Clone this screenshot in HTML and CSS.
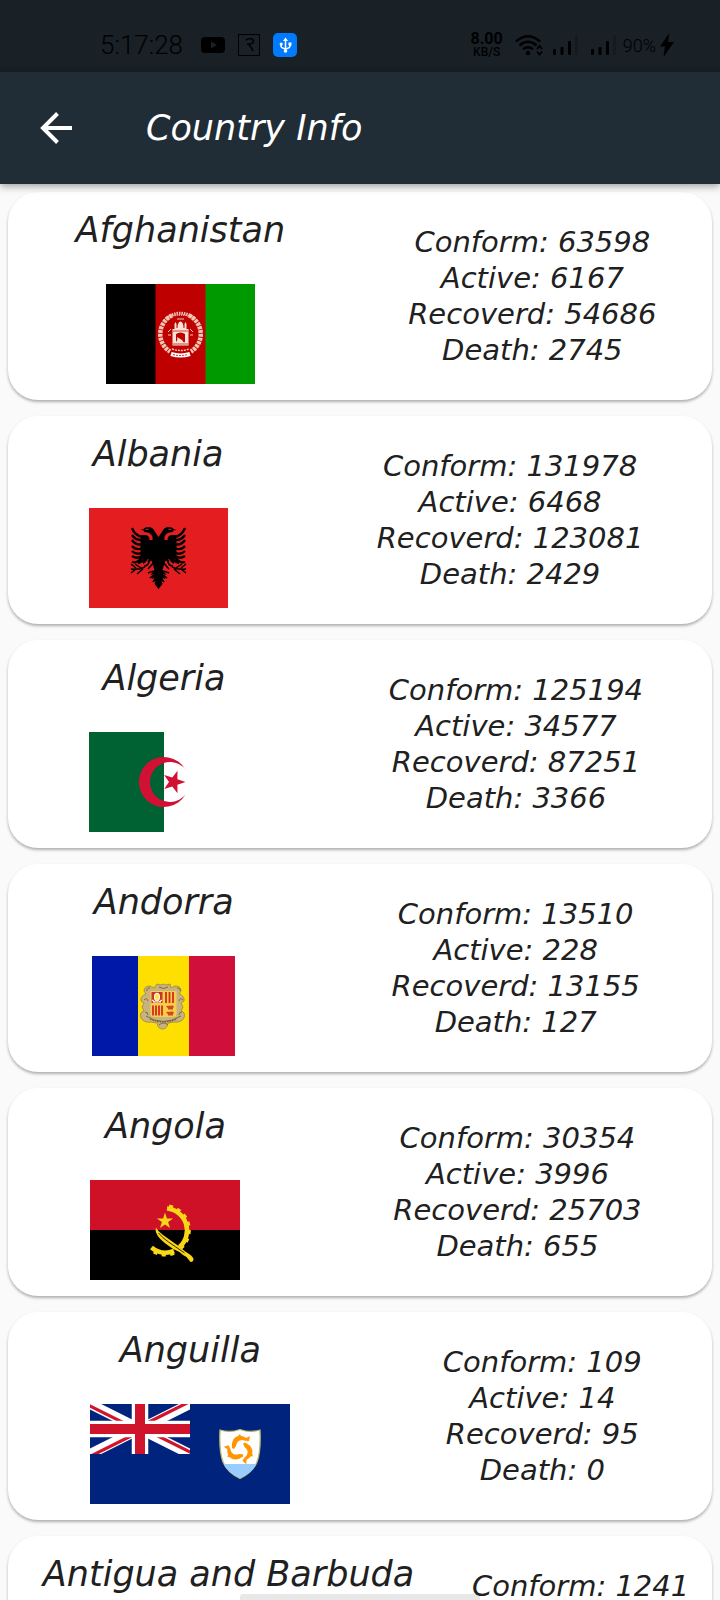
FILE: index.html
```html
<!DOCTYPE html>
<html lang="en">
<head>
<meta charset="utf-8">
<meta name="viewport" content="width=device-width, initial-scale=1">
<title>Country Info</title>
<link rel="stylesheet" href="styles.css">
</head>
<body>
<div class="screen">
  <div class="status">
    <span class="clock">5:17:28</span>
    <span class="notices">
      <svg width="24" height="24" viewBox="0 0 24 24"><rect y="4" width="24" height="16" rx="4"/><path d="M10 8.500l6 3.500-6 3.500z" fill="#192026"/></svg>
      <svg width="24" height="24" viewBox="0 0 24 24" fill="none" stroke="#000"><rect x="1.500" y="1.500" width="21" height="21"/><path d="M9 7q5-3 7 0t-3 4l-3 0M12 12q3 3 4 6" stroke-width="1.600"/></svg>
      <svg width="24" height="24" viewBox="0 0 24 24"><rect width="24" height="24" rx="5" fill="#007bff"/><g fill="none" stroke="#fff" stroke-width="1.500"><path d="M12.500 7v11M8 11v2q0 2 4.500 3 4.500-1 4.500-3v-2"/></g><path d="M12.500 4.500l2.500 3.500h-5z" fill="#fff"/><circle cx="12.500" cy="18" r="1.800" fill="#fff"/><circle cx="8.200" cy="11" r="1.600" fill="#fff"/><rect x="15.500" y="9.500" width="3" height="3" fill="#fff"/></svg>
    </span>
    <span class="rate"><b>8.00</b><small>KB/S</small></span>
    <svg class="wifi" width="28" height="22" viewBox="0 0 28 22"><g fill="none" stroke="#000" stroke-width="2.400"><path d="M1 7.500q12-10.500 24 0M4.500 11.500q8.500-7.500 17 0M8 15.200q5-4 10 0"/></g><circle cx="13" cy="19" r="2.200"/><path d="M22 15l2.500-3 2.500 3M22 17.500l2.500 3 2.500-3" fill="none" stroke="#000" stroke-width="1.800"/></svg>
    <svg class="signal" width="26" height="22" viewBox="0 0 26 22"><rect y="15" width="3" height="6" rx="1"/><rect x="7.500" y="13" width="3" height="8" rx="1"/><rect x="15" y="7" width="3" height="14" rx="1"/><rect x="22" y="1" width="3" height="20" rx="1" fill="#141a20"/></svg>
    <svg class="signal" width="26" height="22" viewBox="0 0 26 22"><rect y="15" width="3" height="6" rx="1"/><rect x="7.500" y="13" width="3" height="8" rx="1"/><rect x="15" y="7" width="3" height="14" rx="1"/><rect x="22" y="1" width="3" height="20" rx="1" fill="#141a20"/></svg>
    <span class="battery">90%</span>
    <svg width="14" height="24" viewBox="0 0 14 24"><path d="M9.500 0L0 13.500h5L3.500 24 14 9H8z"/></svg>
  </div>

  <header class="appbar">
    <button class="back" type="button" aria-label="Back">
      <svg width="34" height="34" viewBox="0 0 34 34" fill="none" stroke="#fff" stroke-width="4"><path d="M33 17H4M18.500 2.500L4 17l14.500 14.500"/></svg>
    </button>
    <h1>Country Info</h1>
  </header>

  <main class="list">
    <article class="card">
      <div class="country">
        <h2>Afghanistan</h2>
        <svg width="149" height="100" viewBox="0 0 149 100">
          <rect width="149" height="100" fill="#090"/><rect width="99.500" height="100" fill="#be0000"/><rect width="49.500" height="100"/>
          <g fill="none" stroke="#f3c5b5">
            <path d="M66 31.500A20.500 20.500 0 0 0 64 67.500M83 31.500A20.500 20.500 0 0 1 85 67.500" stroke-width="4.500" stroke-dasharray="3 .8"/>
            <path d="M60 35A21 21 0 0 1 89 35" stroke-width="3" stroke-dasharray="1.500 .9"/>
            <path d="M62 33.500q12.500-5 25 0" stroke-width="1.500" stroke-dasharray="1.200 1"/>
            <path d="M66 65q8.500 3 17 0" stroke-width="1.500" stroke-dasharray="2 1"/>
            <path d="M65 70q9.500 3 19 0" stroke="#fff" stroke-width="4"/>
            <path d="M62 48l3-3m-3 6h3M87 48l-3-3m3 6h-3M71 35h7"/>
          </g>
          <path d="M66.500 61.500V45h2v-5l1-2 1 2v4h1q0-6 3-6.500 3 .5 3 6.500h1v-4l1-2 1 2v5h2v16.500z" fill="#f8e2d5"/>
          <path d="M70 58v-8q4.500-3 9 0v8l-3 1-4-4z" fill="#be0000"/><path d="M71 53l5 3 2 3h-6z" fill="#f8e2d5"/><path d="M67 47h15M67 60h15" stroke="#be0000" stroke-width=".7"/>
          <path d="M67 70.500q7.500 2 15 0" fill="none" stroke="#be0000" stroke-width=".8" stroke-dasharray="2 1"/>
        </svg>
      </div>
      <div class="stats"><p>Conform: 63598</p><p>Active: 6167</p><p>Recoverd: 54686</p><p>Death: 2745</p></div>
    </article>

    <article class="card">
      <div class="country">
        <h2>Albania</h2>
        <svg width="139" height="100" viewBox="0 0 139 100">
          <defs><g id="eagle-half">
            <path d="M70 29h-.5l-4-6q-2-4-6-4-4 0-5 2l-3 1q3 0 4 1l-1 1q6 0 8 3 2 2 1 5h-3q0-5-5-5h-4v21q2 4 6 3 5 0 6 4 1 4 2 7l-4 5 4-1-3 5 3-1-2 4 3-1-1 3 4 5h.5z"/>
            <path d="M43 20q3 8 11 9M43 27q4 6 11 5M43 32q4 6 11 4M43 38q4 5 11 2M43 43q5 5 11 1M43 48q6 4 11-1M43 54q7 2 11-7M49 55q6-1 8-9M54 55q4-3 5-8M59 54q3-2 3-7" fill="none" stroke="#000" stroke-width="2.300"/>
            <path d="M65 54q-3 4-6 7M60 54q-1 4-5 4M56 59q-6 3-14 2M54 61l-6 5M52 60l-6-4M47 61l-5 4M47 60l-5-4M67 63q-4 0-8 2M68 66q-4 1-7 4M69 70q-3 1-5 4" fill="none" stroke="#000" stroke-width="1.500"/>
          </g></defs>
          <rect width="139" height="100" fill="#e41e20"/>
          <use href="#eagle-half"/><use href="#eagle-half" transform="matrix(-1 0 0 1 139 0)"/>
          <path d="M56.500 21.500h3M79.500 21.500h3" stroke="#e41e20" stroke-width=".8"/>
        </svg>
      </div>
      <div class="stats"><p>Conform: 131978</p><p>Active: 6468</p><p>Recoverd: 123081</p><p>Death: 2429</p></div>
    </article>

    <article class="card">
      <div class="country">
        <h2>Algeria</h2>
        <svg width="150" height="100" viewBox="0 0 150 100">
          <rect width="150" height="100" fill="#fff"/><rect width="75" height="100" fill="#006233"/>
          <path d="M96.500 37.500A25 25 0 1 0 96.500 62.500 20 20 0 1 1 96.500 37.500z" fill="#d21034"/>
          <path d="M96.500 50L88.400 52.700 88.500 61.200 83.300 54.400 75.200 57 80 50 75.200 43 83.300 45.600 88.500 38.800 88.400 47.300z" fill="#d21034"/>
        </svg>
      </div>
      <div class="stats"><p>Conform: 125194</p><p>Active: 34577</p><p>Recoverd: 87251</p><p>Death: 3366</p></div>
    </article>

    <article class="card">
      <div class="country">
        <h2>Andorra</h2>
        <svg width="143" height="100" viewBox="0 0 143 100">
          <rect width="143" height="100" fill="#d0103a"/><rect width="97" height="100" fill="#fedf00"/><rect width="46" height="100" fill="#0018a8"/>
          <path d="M65 28l4 1 2.500-1 2.500 1 4-1 1 4 4-2q6 0 6 5l-2 3q6 2 5 7l-3 2 2 4-2 4q5 1 3 7-3 5-10 4l-6 1q-1 6-5.500 6t-5.500-6l-6-1q-7 1-10-4-2-6 3-7l-2-4 2-4-3-2q-1-5 5-7l-2-3q0-5 6-5l4 2z" fill="#c7b37f" stroke="#a08445" stroke-width=".8"/>
          <path d="M55 35q-1-3 3-3M88 35q1-3-3-3M67 31q4.500 3 9 0M52 44q3-3 4 1M91 44q-3-3-4 1M54 60q17 11 35 0M53 56q3 0 3 3M90 56q-3 0-3 3M67 69q4.500-4 9 0" fill="none" stroke="#80693b"/>
          <path d="M58 63q13 6 27 0" fill="none" stroke="#6c552c" stroke-width="1.200" stroke-dasharray="1.500 1"/>
          <path d="M58.500 35h26v23q0 3-4 3h-18q-4 0-4-3z" fill="#f5cf4b"/>
          <rect x="59.500" y="36" width="11" height="11" fill="#c93425"/><ellipse cx="65" cy="41" rx="2.600" ry="4" fill="#ffe54b" stroke="#fff"/><path d="M61 46h8M60 44l3 2M70 44l-3 2" stroke="#fff" stroke-width="1.200"/>
          <path d="M74 36v11M77.500 36v11M81 36v11M61 49.500v10M64 49.500v10M67 49.500v10M70 49.500v10" stroke="#d52b1e" stroke-width="1.800"/>
          <path d="M74 50l7-.5 1 1.500-1 1v1.500h-5v-1zM74 56l7-.5 1 1.500-1 1v1.500h-5v-1z" fill="#d7461d"/>
        </svg>
      </div>
      <div class="stats"><p>Conform: 13510</p><p>Active: 228</p><p>Recoverd: 13155</p><p>Death: 127</p></div>
    </article>

    <article class="card">
      <div class="country">
        <h2>Angola</h2>
        <svg width="150" height="100" viewBox="0 0 150 100">
          <rect width="150" height="100"/><rect width="150" height="50" fill="#ce1126"/>
          <g fill="none" stroke="#f9d616">
            <path d="M77 28.500A22 22 0 0 1 89.500 67M84 71A22 22 0 0 1 61.500 67.500" stroke-width="4.600"/>
            <path d="M79 26.400A24 24 0 0 1 91 68M84 73A24 24 0 0 1 60.500 69.500" stroke-width="3.600" stroke-dasharray="4 4.400"/>
          </g>
          <path d="M75 32.500l1.900 5.900h6.200l-5 3.700 1.900 5.900-5-3.600-5 3.600 1.900-5.900-5-3.700h6.200z" fill="#f9d616"/>
          <path d="M66 47.500q2 4 7 7.500l17 12q3 3 6 5 7 4 7.500 7 0 3-3 3l-4-5q-4-2-7-5-6-2-12-7-14-10-11.500-17.500z" fill="#f9d616"/>
          <path d="M68.500 53q4 5 10 9t16 11" fill="none" stroke="#000" stroke-width=".8"/>
        </svg>
      </div>
      <div class="stats"><p>Conform: 30354</p><p>Active: 3996</p><p>Recoverd: 25703</p><p>Death: 655</p></div>
    </article>

    <article class="card">
      <div class="country">
        <h2>Anguilla</h2>
        <svg width="200" height="100" viewBox="0 0 200 100">
          <defs>
            <clipPath id="canton"><path d="M0 0h100v50H0z"/></clipPath>
            <path id="dolphin" d="M142 44q-1-10 6-12l2-2 1 2q3 0 5 2l4-2-1 5q-4 0-7-1-5 0-6 6l-2 3z"/>
          </defs>
          <rect width="200" height="100" fill="#00247d"/>
          <g clip-path="url(#canton)" fill="none">
            <path d="M0 0l100 50M100 0L0 50" stroke="#fff" stroke-width="10"/>
            <path d="M-1 1.500l51 25.500M101 48.500L50 23M49 23l51-25.500M51 27L0 52.500" stroke="#cf142b" stroke-width="3.200"/>
            <path d="M50 0v50M0 25h100" stroke="#fff" stroke-width="16.500"/>
            <path d="M50 0v50M0 25h100" stroke="#cf142b" stroke-width="10"/>
          </g>
          <path d="M130 26q10 3 20-.5 10 3.500 20 .5 1 22-3 32-4 10-17 16.500-13-6.500-17-16.500-4-10-3-32z" fill="#fff" stroke="#b8b86b" stroke-width="1.300"/>
          <path d="M133.800 60h32.400q-4 9-16.200 14-12.200-5-16.200-14z" fill="#9cf"/>
          <g fill="#ff9500"><use href="#dolphin"/><use href="#dolphin" transform="rotate(120 150 45)"/><use href="#dolphin" transform="rotate(240 150 45)"/></g>
        </svg>
      </div>
      <div class="stats"><p>Conform: 109</p><p>Active: 14</p><p>Recoverd: 95</p><p>Death: 0</p></div>
    </article>

    <article class="card">
      <div class="country"><h2>Antigua and Barbuda</h2></div>
      <div class="stats"><p>Conform: 1241</p></div>
    </article>
  </main>
  <div class="home-bar"></div>
</div>
</body>
</html>
```

FILE: styles.css
```css
* { box-sizing: border-box; }
body {
  margin: 0;
  background: #fafafa;
  color: #202020;
  font-family: "DejaVu Sans", sans-serif;
}
h1, h2, p { margin: 0; font-weight: 400; font-style: italic; white-space: nowrap; }
svg { display: block; flex: none; }

.screen {
  position: relative;
  display: flex;
  flex-direction: column;
  height: 100vh;
  overflow: hidden;
}

.status {
  flex: none;
  display: flex;
  align-items: center;
  height: 72px;
  padding: 18px 46px 0 100px;
  background: #192026;
  color: #000;
  font-family: Roboto, sans-serif;
}
.clock { font-size: 26px; line-height: 30px; font-weight: 300; }
.notices { display: flex; gap: 12px; margin: 0 auto 0 18px; }
.rate { display: flex; flex-direction: column; align-items: center; font-weight: 500; }
.rate b { font-size: 16px; line-height: 14px; font-weight: 700; }
.rate small { font-size: 12px; line-height: 12px; }
.wifi { margin: 0 10px 0 12px; }
.signal { margin-right: 12px; }
.signal + .signal { margin-right: 6px; }
.battery { margin-right: 4px; font-size: 18px; font-weight: 300; }

.appbar {
  position: relative;
  z-index: 1;
  flex: none;
  display: flex;
  align-items: center;
  gap: 66px;
  height: 112px;
  padding: 0 32px;
  background: #212d36;
  box-shadow: 0 2px 8px rgba(0, 0, 0, .4);
  color: #fff;
}
.appbar h1 { font-size: 35px; line-height: 48px; }
.back {
  display: flex;
  align-items: center;
  justify-content: center;
  width: 48px;
  height: 48px;
  padding: 0;
  border: 0;
  background: none;
}

.list {
  flex: 1;
  display: flex;
  flex-direction: column;
  gap: 16px;
  min-height: 0;
  padding: 8px;
  overflow: hidden;
}
.card {
  flex: none;
  display: flex;
  min-height: 208px;
  border-radius: 30px;
  background: #fff;
  box-shadow: 0 2px 3px rgba(0, 0, 0, .3);
}
.country {
  flex: 1 0 auto;
  display: flex;
  flex-direction: column;
  align-items: center;
  gap: 30px;
  padding: 14px 12px 16px;
}
.country h2 { font-size: 35px; line-height: 48px; }
.stats {
  flex: 1 0 auto;
  padding: 32px 0;
  font-size: 29px;
  line-height: 36px;
  text-align: center;
}

.home-bar {
  position: absolute;
  bottom: 0;
  left: 50%;
  width: 240px;
  height: 6px;
  margin-left: -120px;
  border-radius: 3px 3px 0 0;
  background: rgba(0, 0, 0, .09);
}
```
